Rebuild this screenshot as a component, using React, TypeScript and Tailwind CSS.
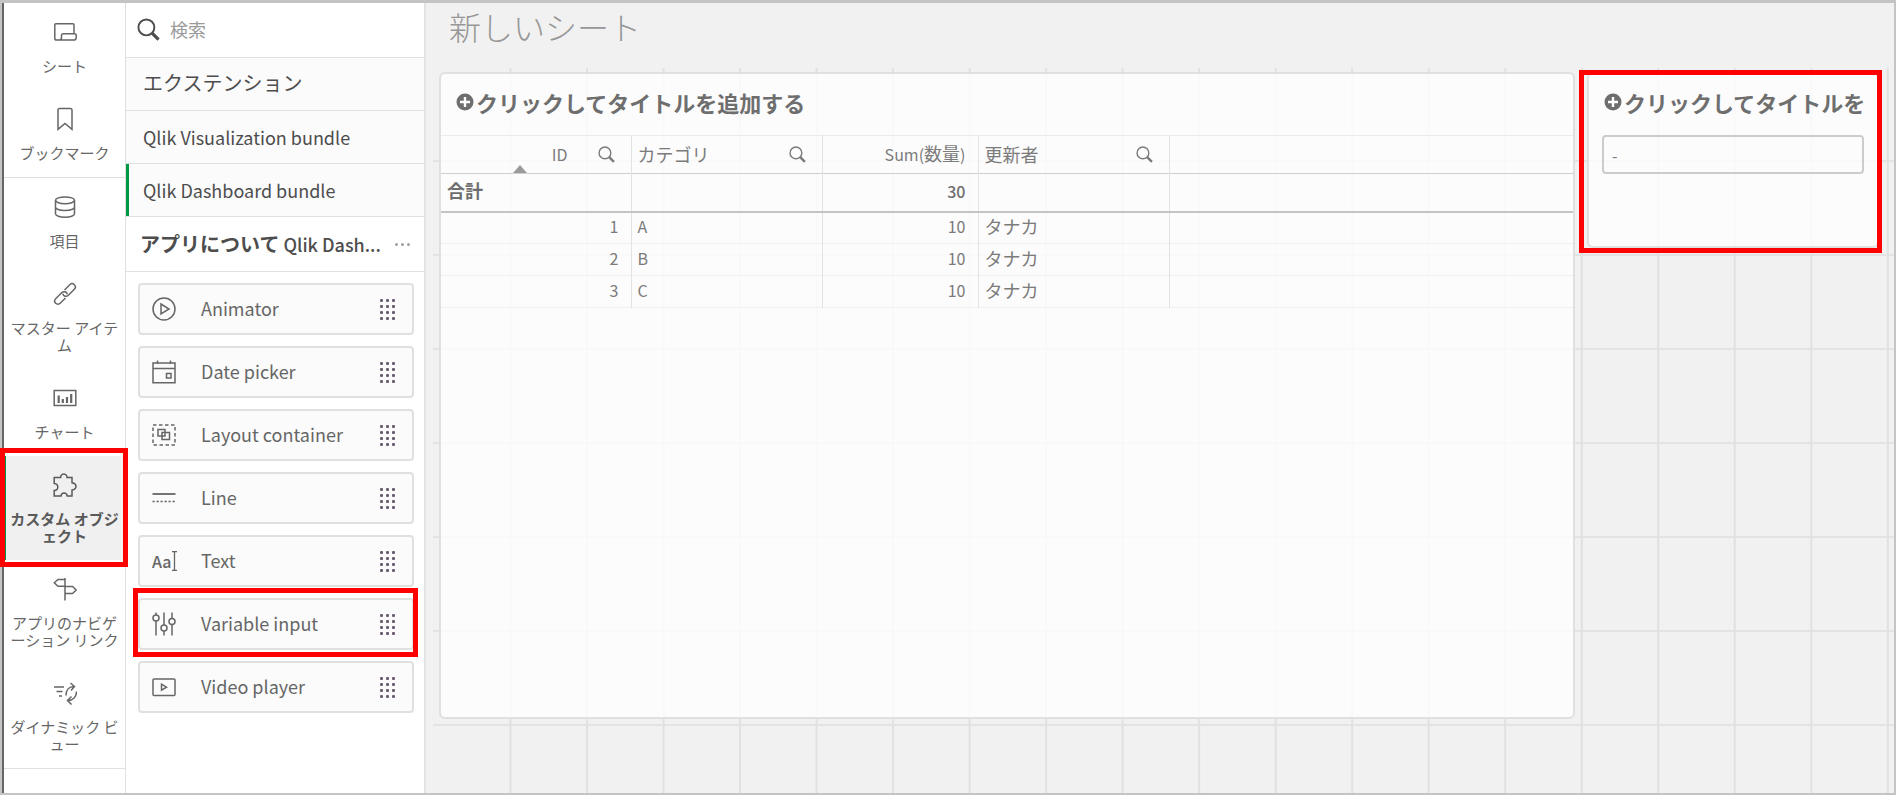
import React, { useState } from 'react';
import clsx from 'clsx';

type IconProps = { children: React.ReactNode };

const Icon = ({ children }: IconProps) => (
    <svg width="24" height="24" viewBox="0 0 24 24" fill="none" stroke="currentColor" strokeWidth="1.5" aria-hidden="true" className="shrink-0">
        {children}
    </svg>
);

const SearchIcon = ({ size }: { size: number }) => (
    <svg width={size} height={size} viewBox="0 0 24 24" fill="none" stroke="currentColor" aria-hidden="true" className="shrink-0">
        <circle cx="9.8" cy="9.8" r="8.3" strokeWidth="2" />
        <path d="M15.8 15.8 22.5 22.5" strokeWidth="3.4" />
    </svg>
);

const PlusIcon = () => (
    <svg width="18" height="18" viewBox="0 0 18 18" aria-hidden="true" className="shrink-0">
        <circle cx="9" cy="9" r="8.5" fill="#6e6e6e" />
        <path d="M9 4v10M4 9h10" stroke="#fff" strokeWidth="2.4" />
    </svg>
);

const Grip = () => (
    <svg width="15" height="21" viewBox="0 0 15 21" fill="#6a5d70" aria-hidden="true">
        {[0, 6, 12].map(x => [0, 6, 12, 18].map(y => (
            <rect key={`${x}-${y}`} x={x} y={y} width="3" height="3" rx="1" />
        )))}
    </svg>
);

const railItems = [
    { id: 'sheets', lines: ['シート'], icon: <Icon><path d="M3 20H17.5M1.8 18.5V4.7q0-1 1-1H20q1 0 1 1V13.5M6.5 20q2 0 2-2.5V15.6q0-1.8 2-1.8H21.5q1.7 0 1.7 1.8v1.8q0 2.6-2.6 2.6H3.5q-1.7 0-1.7-1.5" /></Icon> },
    { id: 'bookmarks', lines: ['ブックマーク'], icon: <Icon><path d="M5 22.3V3q0-1.6 1.6-1.6H17.4Q19 1.4 19 3V22.3L12 16.4Z" /></Icon> },
    { id: 'fields', lines: ['項目'], icon: <Icon><ellipse cx="12" cy="5.3" rx="9.5" ry="3.4" /><path d="M2.5 5.3V18.7c0 2 4.2 3.5 9.5 3.5s9.5-1.5 9.5-3.5V5.3M2.5 12c0 2 4.2 3.4 9.5 3.4s9.5-1.4 9.5-3.4" /></Icon> },
    { id: 'master', lines: ['マスター アイテ', 'ム'], icon: <Icon><g transform="rotate(-45 12 12)"><path d="M9.5 15.2H2a3.2 3.2 0 0 1 0-6.400H10.800a3.200 3.200 0 0 1 2.600 5" /><path d="M14.500 8.800H22a3.200 3.200 0 0 1 0 6.400H13.200a3.200 3.200 0 0 1-2.600-5" /></g></Icon> },
    { id: 'charts', lines: ['チャート'], icon: <Icon><path d="M1.2 4.5H22.8V19.5H1.2Z" /><path d="M5.7 9.5V17M9.8 13V17M14 11V17M18.2 8V17" strokeWidth="2.2" /></Icon> },
    { id: 'custom', lines: ['カスタム オブジ', 'ェクト'], icon: <Icon><path d="M1.2 4.6H7.6C7.6 3.6 8.2 1 10.8 1s3.2 2.6 3.2 3.6H19V9.8c1 .2 4 .8 4 3.6s-3 3.400-4 3.600V23H14.200c-.2-1.600-1.200-3-3.100-3s-2.900 1.400-3.100 3H1.200V17.500c2-.2 3.600-1.500 3.600-3.600s-1.600-3.300-3.600-3.500Z" /></Icon> },
    { id: 'navigation', lines: ['アプリのナビゲ', 'ーション リンク'], icon: <Icon><path d="M12 1V23.500M12 2.500H5L1.300 5.800 5 9.200H12M12 9.500H19.500L23.200 13 19.500 16.500H12" /></Icon> },
    { id: 'dynamic', lines: ['ダイナミック ビ', 'ュー'], icon: <Icon><path d="M1 6H11M3.500 10.500H9.500M6 15H9M13 14.500C13 9 16 5.500 21 5.500M17.500 2 21.500 5.500 18 9.500M23.500 10.500C23.500 16 20 19.500 15 19.500M18.500 15.500 14.500 19.500 18.500 23.500" /></Icon> },
];

const bundles = ['Qlik Visualization bundle', 'Qlik Dashboard bundle'];

const objects = [
    { name: 'Animator', icon: <Icon><circle cx="12" cy="12" r="11" /><path d="M9 7 17 12 9 17Z" /></Icon> },
    { name: 'Date picker', icon: <Icon><path d="M1 3H23V22.800H1ZM1 8.500H23M5.500 0.500V4M18.500 0.500V4" /><rect x="14.500" y="13.500" width="4.500" height="4.500" /></Icon> },
    { name: 'Layout container', icon: <Icon><path d="M1 2H23V22H1Z" strokeDasharray="3.500 2.500" /><path d="M6 6.500H13V13H6ZM10 9.500H17.500V16.500H10Z" /></Icon> },
    { name: 'Line', icon: <Icon><path d="M0.500 8H23.500" strokeWidth="1.800" /><path d="M0.500 15.500H23.500" strokeDasharray="2.200 1.800" /></Icon> },
    { name: 'Text', icon: <TextIcon /> },
    { name: 'Variable input', icon: <Icon><path d="M4 0.500V3M4 9V23.500M12 0.500V13M12 19V23.500M20 0.500V6.500M20 12.500V23.500" /><circle cx="4" cy="6" r="3" /><circle cx="12" cy="16" r="3" /><circle cx="20" cy="9.500" r="3" /></Icon> },
    { name: 'Video player', icon: <Icon><rect x="1" y="4" width="22" height="16.500" rx="1" /><path d="M9.500 9.200 14.500 12.200 9.500 15.200Z" /></Icon> },
];

function TextIcon() {
    return (
        <span className="flex items-center text-base leading-6 font-medium" aria-hidden="true">
            Aa
            <svg width="5" height="20" viewBox="0 0 5 20" fill="none" stroke="currentColor"><path d="M0 .7H5M0 19.300H5M2.500 .7V19.300" strokeWidth="1.300" /></svg>
        </span>
    );
}

const rows = [
    { id: 1, category: 'A', sum: 10, updatedBy: 'タナカ' },
    { id: 2, category: 'B', sum: 10, updatedBy: 'タナカ' },
    { id: 3, category: 'C', sum: 10, updatedBy: 'タナカ' },
];

// Red frame around the parts the guide points at
const Highlight = ({ className }: { className: string }) => (
    <span className={clsx('pointer-events-none absolute z-10 border-5 border-[#ff0000]', className)} />
);

const App = () => {
    const [activeTab, setActiveTab] = useState<string>('custom');
    const [activeBundle, setActiveBundle] = useState<string>('Qlik Dashboard bundle');
    const [search, setSearch] = useState<string>('');
    const [variable, setVariable] = useState<string>('-');

    return (
        <div lang="ja" className="flex h-screen border-t-3 border-r-2 border-b-2 border-l-2 border-[#c4c4c4] bg-white font-['Noto_Sans_CJK_JP',sans-serif] text-[#666666]">
            <nav className="w-[124px] shrink-0 border-r border-l-2 border-r-[#e0e0e0] border-l-[#666666]">
                {railItems.map(item => (
                    <div key={item.id} className={clsx('relative', (item.id === 'bookmarks' || item.id === 'dynamic') && 'border-b border-[#e0e0e0]')}>
                        <button
                            onClick={() => setActiveTab(item.id)}
                            className={clsx(
                                'flex w-full cursor-pointer flex-col items-center gap-[13px] pt-[17px] pb-4 text-[15px] leading-[17px]',
                                activeTab === item.id && 'bg-[#f0f0f0] font-bold text-[#595959] shadow-[inset_2px_0_0_#009845]'
                            )}
                        >
                            {item.icon}
                            <span>
                                {item.lines.map(line => <span key={line} className="block whitespace-nowrap">{line}</span>)}
                            </span>
                        </button>
                        {item.id === 'custom' && <Highlight className="-top-2 -right-[3px] -bottom-[7px] -left-1" />}
                    </div>
                ))}
            </nav>

            <aside className="flex w-[300px] shrink-0 flex-col border-r-2 border-[#e3e3e3]">
                <label className="flex h-[55px] items-center gap-[10px] border-b border-[#e0e0e0] pb-[2px] pl-[11px] text-[#4d4d4d]">
                    <SearchIcon size={23} />
                    <input
                        type="text"
                        aria-label="検索"
                        placeholder="検索"
                        value={search}
                        onChange={event => setSearch(event.target.value)}
                        className="w-full text-lg outline-none placeholder:text-[#9a9a9a]"
                    />
                </label>
                <h2 className="h-[53px] border-b border-[#e0e0e0] bg-[#fbfbfb] pl-[17px] text-xl leading-[50px] text-[#4d4d4d]">エクステンション</h2>
                {bundles.map(bundle => (
                    <button
                        key={bundle}
                        onClick={() => setActiveBundle(bundle)}
                        className={clsx(
                            'h-[53px] cursor-pointer border-b border-[#e0e0e0] bg-[#fbfbfb] pl-[17px] text-left text-lg text-[#4d4d4d]',
                            activeBundle === bundle && 'shadow-[inset_3px_0_0_#009845]'
                        )}
                    >
                        {bundle}
                    </button>
                ))}
                <div className="flex h-[55px] items-center justify-between border-b border-[#e0e0e0] pr-[14px] pl-[14px] text-[#4d4d4d]">
                    <h3 className="truncate text-lg font-medium"><span className="text-xl font-bold">アプリについて</span> Qlik Dash...</h3>
                    <button aria-label="その他" className="flex cursor-pointer gap-[3px]">
                        <i className="size-[3px] rounded-full bg-[#a0a0a0]" />
                        <i className="size-[3px] rounded-full bg-[#a0a0a0]" />
                        <i className="size-[3px] rounded-full bg-[#a0a0a0]" />
                    </button>
                </div>
                <ul className="flex flex-col gap-[11px] pt-[11px] pr-[10px] pl-3">
                    {objects.map(object => (
                        <li key={object.name} className="relative">
                            <button className="flex h-13 w-full cursor-grab items-center rounded-sm border-2 border-[#e0e0e0] bg-[#fbfbfb] pr-[17px] pl-3 text-lg">
                                <span className="flex w-[49px] items-center">{object.icon}</span>
                                <span className="flex-1 pb-[2px] text-left">{object.name}</span>
                                <Grip />
                            </button>
                            {object.name === 'Variable input' && <Highlight className="-top-[10px] -right-1 -bottom-[7px] -left-[5px]" />}
                        </li>
                    ))}
                </ul>
            </aside>

            <main className="flex min-w-0 flex-1 flex-col bg-[#f1f1f1] pl-[7px]">
                <h1 className="h-[65px] pl-4 text-[32px] leading-[47px] font-light text-[#979797]">新しいシート</h1>
                <div className="flex-1 bg-[linear-gradient(to_top,#e3e3e3_2px,transparent_2px)] bg-[size:100%_94px]">
                    <div className="mr-[5px] ml-[2px] h-full bg-[linear-gradient(to_left,#e1e1e1_2px,transparent_2px)] bg-[size:calc(100%/19)_100%] pt-1 pr-[10px] pl-1">
                        <div className="flex items-start gap-3">
                            <section className="h-[647px] min-w-0 flex-1 rounded-md border-2 border-[#e0e0e0] bg-white/80 bg-clip-padding">
                                <h2 className="flex h-[61px] items-center gap-[2px] pb-[5px] pl-[15px] text-[22px] font-bold text-[#6e6e6e]">
                                    <PlusIcon />
                                    <span className="truncate">クリックしてタイトルを追加する</span>
                                </h2>
                                <table className="w-full table-fixed border-collapse text-lg leading-6 text-[#7b7b7b]">
                                    <colgroup>
                                        <col className="w-[190px]" />
                                        <col className="w-[191px]" />
                                        <col className="w-[156px]" />
                                        <col className="w-[191px]" />
                                        <col />
                                    </colgroup>
                                    <thead>
                                        <tr className="h-[38px] border-t border-b border-t-[#ececec] border-b-[#cfcfcf]">
                                            <th className="relative border-r border-[#e3e3e3] p-0 pr-4 font-normal">
                                                <div className="flex items-center justify-end gap-[30px] text-base">
                                                    <span className="pb-[2px]">ID</span>
                                                    <SearchIcon size={17} />
                                                </div>
                                                <svg width="14" height="8" viewBox="0 0 14 8" className="absolute bottom-0 left-[72px]" aria-hidden="true"><path d="M7 0 14 8H0Z" fill="#9a9a9a" /></svg>
                                            </th>
                                            <th className="border-r border-[#e3e3e3] p-0 pr-4 pl-[6px] font-normal">
                                                <div className="flex items-center justify-between"><span className="pb-[2px]">カテゴリ</span><SearchIcon size={17} /></div>
                                            </th>
                                            <th className="border-r border-[#e3e3e3] p-0 pr-3 pb-[2px] text-right font-normal"><span className="text-base">Sum(</span>数量<span className="text-base">)</span></th>
                                            <th className="border-r border-[#e3e3e3] p-0 pr-4 pl-[6px] font-normal">
                                                <div className="flex items-center justify-between"><span className="pb-[2px]">更新者</span><SearchIcon size={17} /></div>
                                            </th>
                                            <th />
                                        </tr>
                                        <tr className="h-[38px] border-b-2 border-[#c4c4c4] text-[#6e6e6e]">
                                            <th className="border-r border-r-[#e3e3e3] p-0 pb-1 pl-[6px] text-left font-bold">合計</th>
                                            <th className="border-r border-r-[#e3e3e3]" />
                                            <th className="border-r border-r-[#e3e3e3] p-0 pr-3 pb-[2px] text-right text-base font-medium">30</th>
                                            <th className="border-r border-r-[#e3e3e3]" />
                                            <th />
                                        </tr>
                                    </thead>
                                    <tbody>
                                        {rows.map(row => (
                                            <tr key={row.id} className="h-8 border-b border-[#efefef]">
                                                <td className="border-r border-r-[#e3e3e3] p-0 pr-3 pb-1 text-right text-base">{row.id}</td>
                                                <td className="border-r border-r-[#e3e3e3] p-0 pb-1 pl-[6px] text-base">{row.category}</td>
                                                <td className="border-r border-r-[#e3e3e3] p-0 pr-3 pb-1 text-right text-base">{row.sum}</td>
                                                <td className="border-r border-r-[#e3e3e3] p-0 pb-1 pl-[6px]">{row.updatedBy}</td>
                                                <td />
                                            </tr>
                                        ))}
                                    </tbody>
                                </table>
                            </section>

                            <section className="relative h-[176px] w-[292px] shrink-0 rounded-md border-2 border-[#e0e0e0] bg-white/80 bg-clip-padding px-[13px]">
                                <h2 className="flex h-[61px] items-center gap-[2px] pb-[5px] pl-[2px] text-[22px] font-bold text-[#6e6e6e]">
                                    <PlusIcon />
                                    <span className="whitespace-nowrap">クリックしてタイトルを</span>
                                </h2>
                                <input
                                    type="text"
                                    aria-label="変数の値"
                                    value={variable}
                                    onChange={event => setVariable(event.target.value)}
                                    className="h-[39px] w-full rounded-sm border-2 border-[#cccccc] px-2 text-base text-[#7b7b7b] outline-none"
                                />
                                <Highlight className="-top-1 -right-[5px] -bottom-[7px] -left-[10px]" />
                            </section>
                        </div>
                    </div>
                </div>
            </main>
        </div>
    );
};

export default App;
